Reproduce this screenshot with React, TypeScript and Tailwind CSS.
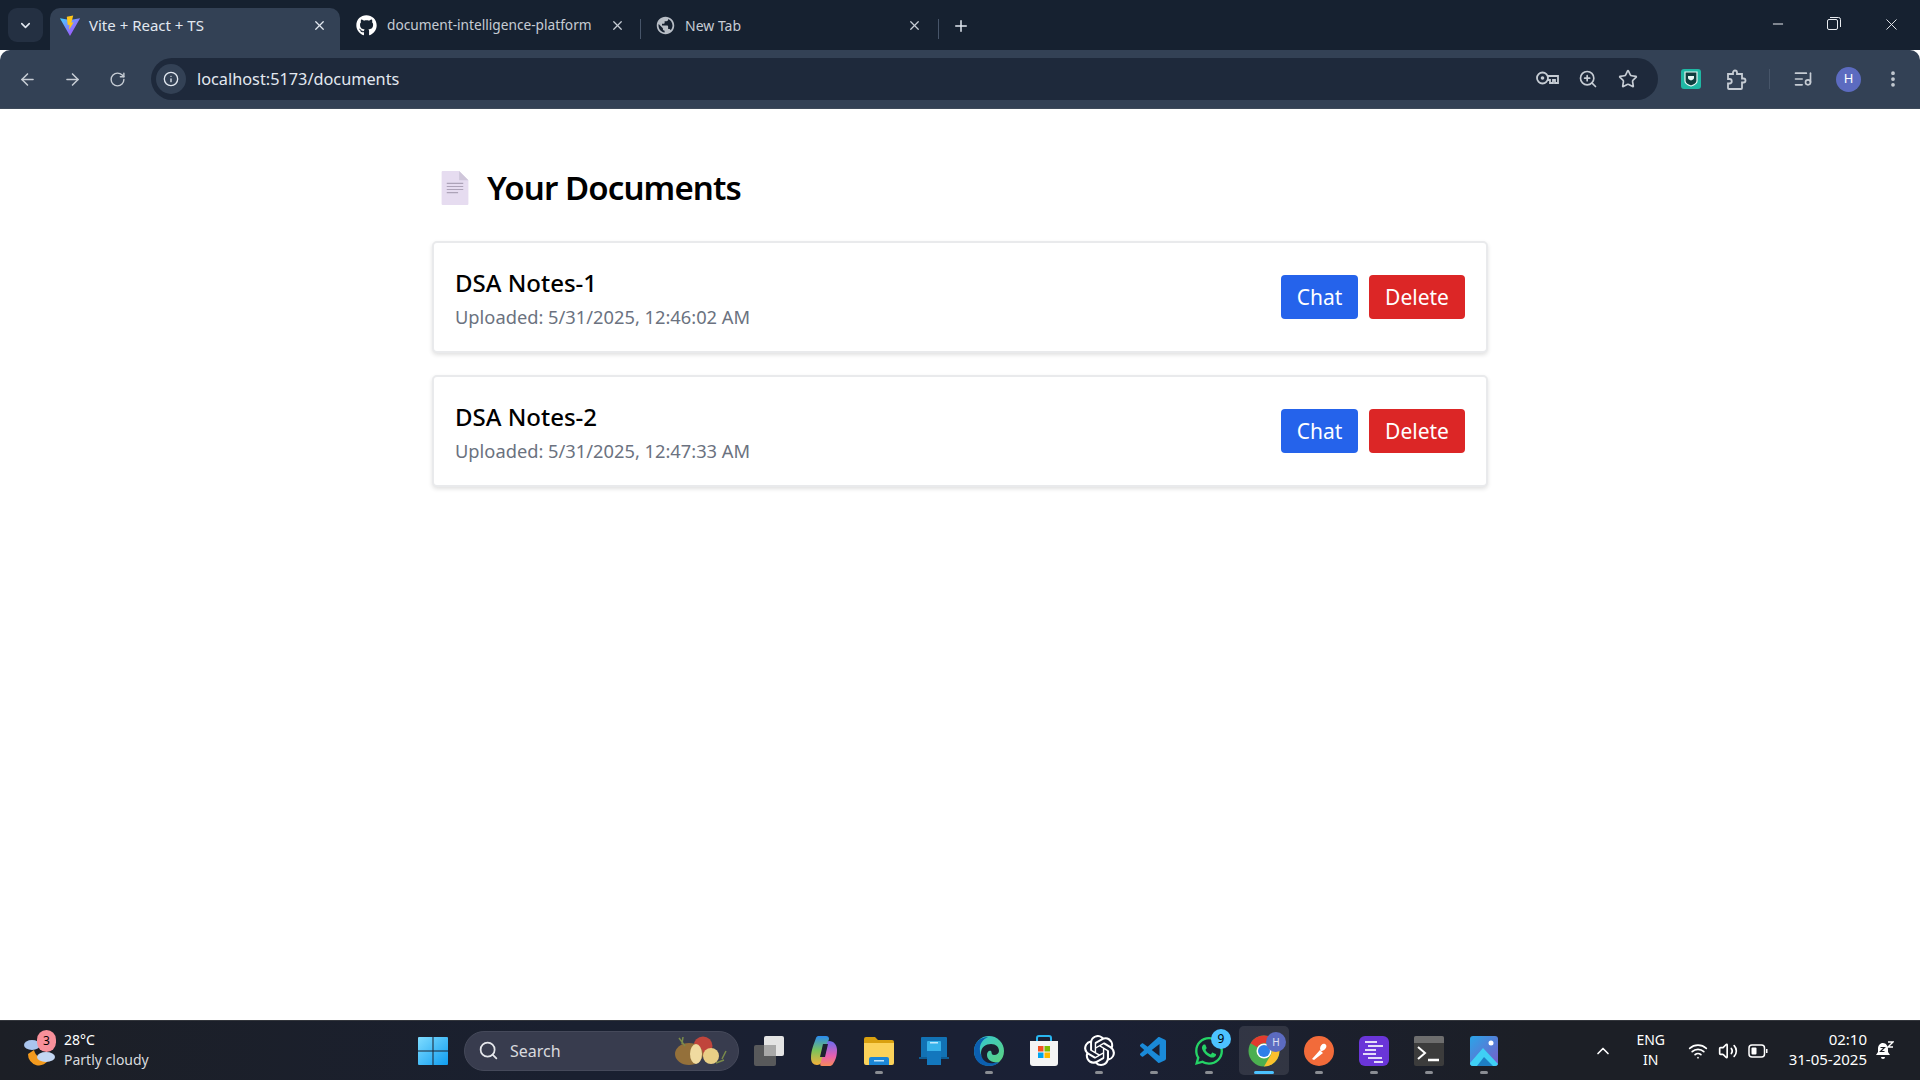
import { ArrowLeft, ArrowRight, RotateCw, Info, ZoomIn, Star, ChevronDown, X, Plus, Minus, Search, ChevronUp, Wifi, Volume2, ListMusic, MoreVertical } from 'lucide-react';
import { FaGithub, FaWhatsapp } from 'react-icons/fa';
import { MdPublic } from 'react-icons/md';
import { SiOpenai } from 'react-icons/si';
import { VscVscode } from 'react-icons/vsc';
import type { ReactNode } from 'react';

const docs = [
  { name: 'DSA Notes-1', uploaded: 'Uploaded: 5/31/2025, 12:46:02 AM' },
  { name: 'DSA Notes-2', uploaded: 'Uploaded: 5/31/2025, 12:47:33 AM' },
];

function ViteIcon() {
  return (
    <svg width="22" height="22" viewBox="0 0 24 24" className="shrink-0">
      <defs>
        <linearGradient id="vite-a" x1="0" y1="0" x2="1" y2="1">
          <stop offset="0" stopColor="#41d1ff" />
          <stop offset="1" stopColor="#bd34fe" />
        </linearGradient>
      </defs>
      <path d="M1 3.5 12 5.5 23 3.5 12 23Z" fill="url(#vite-a)" />
      <path d="M15.5 0.5 8.5 2 9.5 11 11.5 10.5 11 16 16 8 13.5 8.5Z" fill="#ffc517" />
    </svg>
  );
}

function KeyIcon() {
  return (
    <svg width="23" height="16" viewBox="0 0 23 16" fill="none" stroke="currentColor" strokeWidth="1.800" className="mr-[19px]">
      <circle cx="6.500" cy="7" r="5.500" />
      <circle cx="6.500" cy="7" r="1.800" fill="currentColor" stroke="none" />
      <path d="M12 5h10v7h-3V9h-2v3h-3V9h-2" />
    </svg>
  );
}

function PuzzleIcon() {
  return (
    <svg width="20" height="21" viewBox="0 0 20 21" fill="none" stroke="currentColor" strokeWidth="1.800" className="ml-[26px]">
      <path d="M1 5h5V3.500a2 2 0 0 1 4 0V5h5v4.500h1.500a2 2 0 0 1 0 4H15V19a1 1 0 0 1-1 1H2a1 1 0 0 1-1-1v-4.500h1.500a2 2 0 0 0 0-4.500H1Z" />
    </svg>
  );
}

function ShieldExt() {
  return (
    <div className="w-[20px] h-[20px] rounded-[3px] bg-[#1fb8a4] flex items-center justify-center">
      <svg width="14" height="16" viewBox="0 0 14 16">
        <path d="M1 1h12v9c0 2-3 4-6 5-3-1-6-3-6-5Z" fill="#0f3d3d" stroke="#e6f7f4" strokeWidth="1.2" />
        <path d="M4 5h6v2c0 1-1.5 2-3 2.6C5.500 9 4 8 4 7Z" fill="#e6f7f4" />
      </svg>
    </div>
  );
}

function DocEmoji() {
  return (
    <svg width="28" height="34" viewBox="0 0 26 33" className="shrink-0">
      <path d="M1 0h16l9 9v23a1 1 0 0 1-1 1H1a1 1 0 0 1-1-1V1a1 1 0 0 1 1-1Z" fill="#e6dcf0" />
      <path d="M17 0l9 9h-9Z" fill="#cfc6da" />
      <path d="M5 12h16M5 15h16M5 18h16M5 21h11" stroke="#ada3b8" strokeWidth="1" />
    </svg>
  );
}

function WeatherIcon() {
  return (
    <div className="relative w-[34px] h-[36px]">
      <svg width="34" height="36" viewBox="0 0 34 36" className="absolute left-0 top-0">
        <path d="M4 22a11 11 0 0 0 21 5 12 12 0 0 1-15-9Z" fill="#f39a1e" />
        <ellipse cx="8" cy="13" rx="8" ry="5" fill="#a9c5ee" />
        <ellipse cx="22" cy="25" rx="9" ry="5" fill="#c3d6f2" />
      </svg>
      <span className="absolute left-[13px] top-[-2px] w-[19px] h-[22px] rounded-full bg-[#f8909a] text-black text-[12px] flex items-center justify-center">3</span>
    </div>
  );
}

function WinLogo() {
  return (
    <svg width="30" height="30" viewBox="0 0 30 30">
      <defs>
        <linearGradient id="win-a" x1="0" y1="0" x2="1" y2="1">
          <stop offset="0" stopColor="#7fdcff" />
          <stop offset="1" stopColor="#0f9df0" />
        </linearGradient>
      </defs>
      <path d="M1 1h13.500v13.500H0V2a1 1 0 0 1 1-1ZM15.500 1H29a1 1 0 0 1 1 1v12.500H15.500ZM0 15.500h14.500V29H1a1 1 0 0 1-1-1ZM15.500 15.500H30V28a1 1 0 0 1-1 1H15.500Z" fill="url(#win-a)" />
    </svg>
  );
}

function Veggies() {
  return (
    <svg width="56" height="32" viewBox="0 0 56 32">
      <circle cx="29" cy="11" r="9.500" fill="#c0453c" />
      <ellipse cx="15" cy="19" rx="14" ry="11" fill="#94703a" />
      <ellipse cx="22" cy="19" rx="6" ry="10" fill="#f0dba0" />
      <circle cx="37" cy="21" r="8" fill="#e9cf86" />
      <path d="M5 3l6 8M9 2l-1 7M48 24l4-8M42 28l8-3" stroke="#7a8a4a" strokeWidth="1.500" />
    </svg>
  );
}

function TaskView() {
  return (
    <div className="relative w-[30px] h-[30px]">
      <div className="absolute left-[10px] top-0 w-[20px] h-[20px] rounded-[2px] bg-[#e4e4e4]" />
      <div className="absolute left-0 top-[9px] w-[22px] h-[21px] rounded-[2px] bg-[#5f5f5f]/90" />
      <div className="absolute left-[10px] top-[9px] w-[12px] h-[11px] bg-[#a8a8a8]" />
    </div>
  );
}

function Copilot() {
  return (
    <svg width="28" height="32" viewBox="0 0 28 32">
      <defs>
        <linearGradient id="cop-a" x1="0" y1="0" x2="0" y2="1">
          <stop offset="0" stopColor="#2a8bf0" />
          <stop offset="0.5" stopColor="#7cc35a" />
          <stop offset="1" stopColor="#f5b13a" />
        </linearGradient>
        <linearGradient id="cop-b" x1="0" y1="0" x2="0" y2="1">
          <stop offset="0" stopColor="#6b6cf0" />
          <stop offset="0.6" stopColor="#e85fb0" />
          <stop offset="1" stopColor="#f78a5a" />
        </linearGradient>
      </defs>
      <path d="M9 1h7c2 0 3 1 3 3L12 26c-1 3-3 4-5 4-4 0-6-3-6-7 0-8 3-14 5-20 .5-1.500 1.500-2 3-2Z" fill="url(#cop-a)" />
      <path d="M19 6c5 0 8 4 8 9 0 7-2 11-4 14-1 1.500-2 2-4 2h-7c-2 0-2-1-1.500-3L17 8c.3-1.200 1-2 2-2Z" fill="url(#cop-b)" />
      <path d="M13 9h5l-3 13h-5Z" fill="#1c2130" />
    </svg>
  );
}

function Folder() {
  return (
    <svg width="30" height="28" viewBox="0 0 30 28">
      <path d="M0 2a2 2 0 0 1 2-2h9l3 3h14a2 2 0 0 1 2 2v4H0Z" fill="#d9a00f" />
      <path d="M0 6h30v20a2 2 0 0 1-2 2H2a2 2 0 0 1-2-2Z" fill="#fbd25a" />
      <path d="M5 22a2 2 0 0 1 2-2h16a2 2 0 0 1 2 2v6H5Z" fill="#1b86d6" />
      <rect x="10" y="23" width="10" height="1.500" fill="#bfe3fa" />
    </svg>
  );
}

function Phone() {
  return (
    <svg width="30" height="28" viewBox="0 0 30 28">
      <rect x="2" y="0" width="26" height="22" rx="1" fill="#1272b4" />
      <rect x="0" y="20" width="30" height="2" fill="#0e5c94" />
      <rect x="8" y="4" width="14" height="24" rx="1" fill="#36b2ea" />
      <rect x="8" y="14" width="14" height="14" fill="#1377bd" />
      <rect x="11" y="5" width="8" height="1.500" fill="#bfe8fb" />
    </svg>
  );
}

function Edge() {
  return (
    <svg width="30" height="30" viewBox="0 0 30 30">
      <defs>
        <linearGradient id="edge-a" x1="0" y1="0" x2="1" y2="1">
          <stop offset="0" stopColor="#31c6d8" />
          <stop offset="1" stopColor="#5fd37a" />
        </linearGradient>
      </defs>
      <circle cx="15" cy="15" r="15" fill="url(#edge-a)" />
      <path d="M0 15C0 6 7 1 14 1c-5 2-9 7-8 14 1 8 8 14 19 11-3 3-6 4-10 4C6 30 0 24 0 15Z" fill="#0c5fb0" />
      <path d="M7 17c0-6 5-9 10-9 5 0 8 3 8 7 0 2-2 4-5 4-3 0-2-3-3-4-2-1-4 1-4 4 0 4 4 8 10 7-9 4-16-2-16-9Z" fill="#1a2030" />
    </svg>
  );
}

function Store() {
  return (
    <svg width="30" height="32" viewBox="0 0 30 32">
      <path d="M8 7V3a2 2 0 0 1 2-2h10a2 2 0 0 1 2 2v4" fill="none" stroke="#29b6f0" strokeWidth="2" />
      <path d="M1 6h28v22a3 3 0 0 1-3 3H4a3 3 0 0 1-3-3Z" fill="#f4f4f4" />
      <rect x="9" y="11" width="5.500" height="5.500" fill="#f25022" />
      <rect x="15.500" y="11" width="5.500" height="5.500" fill="#7fba00" />
      <rect x="9" y="17.500" width="5.500" height="5.500" fill="#00a4ef" />
      <rect x="15.500" y="17.500" width="5.500" height="5.500" fill="#ffb900" />
    </svg>
  );
}

function Chrome() {
  return (
    <svg width="32" height="32" viewBox="0 0 32 32">
      <circle cx="16" cy="16" r="15.500" fill="#4caf50" />
      <path d="M16 .5a15.500 15.500 0 0 1 13.400 7.750H16a7.750 7.750 0 0 0-6.700 3.900L2.600 8.250A15.500 15.500 0 0 1 16 .5Z" fill="#e33b2e" />
      <path d="M29.400 8.250A15.500 15.500 0 0 1 16 31.500l6.700-11.600a7.750 7.750 0 0 0 0-7.750 7.750 7.750 0 0 0 0-3.900Z" fill="#fbc02d" />
      <circle cx="16" cy="16" r="7.500" fill="#fff" />
      <circle cx="16" cy="16" r="6" fill="#2f7fe8" />
    </svg>
  );
}

function Postman() {
  return (
    <svg width="30" height="30" viewBox="0 0 30 30">
      <circle cx="15" cy="15" r="15" fill="#f26b3a" />
      <path d="M8 23l8-9 3 3-9 7ZM16 13c0-4 3-6 5-5s2 4-1 6-3 1-4-1Z" fill="#fff" />
    </svg>
  );
}

function NotesApp() {
  return (
    <svg width="30" height="30" viewBox="0 0 30 30">
      <rect width="30" height="30" rx="6" fill="#6a35d8" />
      <path d="M6 6h12M9 10h15M6 14h11M4 18h13M9 22h14M15 26h9" stroke="#e3dbf8" strokeWidth="2" />
    </svg>
  );
}

function TerminalApp() {
  return (
    <div className="w-[30px] h-[30px] rounded-[2px] bg-[#3c3c3c] overflow-hidden">
      <div className="h-[7px] bg-[#6e6e6e]" />
      <svg width="30" height="23" viewBox="0 0 30 23">
        <path d="M4 4l7 6-7 6" fill="none" stroke="#fff" strokeWidth="2" />
        <path d="M14 17h11" stroke="#fff" strokeWidth="2.500" />
      </svg>
    </div>
  );
}

function PhotosApp() {
  return (
    <svg width="28" height="30" viewBox="0 0 28 30">
      <defs>
        <linearGradient id="ph-a" x1="0" y1="0" x2="1" y2="1">
          <stop offset="0" stopColor="#2aa5e8" />
          <stop offset="1" stopColor="#7a5bc8" />
        </linearGradient>
      </defs>
      <rect width="28" height="30" rx="3" fill="url(#ph-a)" />
      <circle cx="21" cy="7" r="2.500" fill="#fff" />
      <path d="M0 27 13 12l15 16v-1a3 3 0 0 1-3 3H3a3 3 0 0 1-3-3Z" fill="#3fd0f5" />
      <path d="M7 30l7-9 9 9Z" fill="#1e7fc4" />
    </svg>
  );
}

function BatteryIcon() {
  return (
    <svg width="20" height="14" viewBox="0 0 20 14" className="ml-[10px]">
      <rect x="1" y="1" width="15.500" height="12" rx="3" fill="none" stroke="#fff" strokeWidth="1.500" />
      <rect x="3.500" y="3.500" width="5" height="7" rx="1" fill="#fff" />
      <path d="M18 5h1.500v4H18Z" fill="#fff" />
    </svg>
  );
}

function SnoozeBell() {
  return (
    <svg width="18" height="20" viewBox="0 0 18 20" className="ml-[9px]">
      <path d="M7 2c-3 0-5 2.500-5 6v3l-2 3h14l-2-3V8c0-3-2-6-5-6Z" fill="#fff" />
      <path d="M5 16h4a2 2 0 0 1-4 0Z" fill="#fff" />
      <path d="M4.500 6.500h4l-4 4h4" fill="none" stroke="#1c1f26" strokeWidth="1.200" />
      <path d="M12 1h5l-5 5h5" fill="none" stroke="#fff" strokeWidth="1.400" />
    </svg>
  );
}

function TaskItem({ children, running, active }: { children: ReactNode; running?: boolean; active?: boolean }) {
  return (
    <div className={`relative w-[50px] h-[49px] mx-[2.500px] rounded-[5px] flex items-center justify-center ${active ? 'bg-white/10' : ''}`}>
      {children}
      {running && <span className={`absolute bottom-[1px] h-[3px] rounded-full ${active ? 'w-[20px] bg-[#4cc2ff]' : 'w-[8px] bg-[#8a8d93]'}`} />}
    </div>
  );
}

export default function App() {
  return (
    <div className="flex flex-col h-screen w-full overflow-hidden bg-white font-['Noto_Sans',sans-serif]">
      {/* Tab strip */}
      <div className="h-[50px] shrink-0 bg-[#162130] flex items-end text-[14px]">
        <div className="w-[35px] h-[34px] ml-2 mb-2 rounded-[9px] bg-[#243042] flex items-center justify-center">
          <ChevronDown size={15} strokeWidth={2.5} className="text-[#e2e8f0]" />
        </div>
        <div className="w-[290px] h-[42px] ml-[7px] rounded-t-[10px] bg-[#334155] flex items-center pl-[9px] pr-[13px] pb-[7px] text-[#e2e8f0]">
          <ViteIcon />
          <span className="ml-[8px] flex-1 text-[15px]">Vite + React + TS</span>
          <X size={15} strokeWidth={2} />
        </div>
        <div className="w-[300px] h-[42px] flex items-center pl-[16px] pb-[7px] text-[#c6ccd4]">
          <FaGithub size={21} className="text-white shrink-0" />
          <span className="ml-[10px] w-[210px] overflow-hidden whitespace-nowrap text-[13.700px]">document-intelligence-platform</span>
          <X size={15} strokeWidth={2} className="ml-[13px] shrink-0" />
        </div>
        <div className="w-px h-[20px] mb-[11px] bg-[#475569]" />
        <div className="w-[297px] h-[42px] flex items-center pl-[14px] pr-[16px] pb-[7px] text-[#c6ccd4]">
          <MdPublic size={21} className="text-[#b8bec6] shrink-0" />
          <span className="ml-[9px] flex-1">New Tab</span>
          <X size={15} strokeWidth={2} />
        </div>
        <div className="w-px h-[20px] mb-[11px] bg-[#475569]" />
        <Plus size={18} strokeWidth={2} className="ml-[13px] mb-[15px] text-[#e2e8f0]" />
        <div className="flex-1" />
        <div className="flex items-center h-full pb-[2px] text-[#e8ebef]">
          <Minus size={16} strokeWidth={1.500} className="mr-[41px]" />
          <svg width="14" height="14" viewBox="0 0 14 14" className="mr-[41px]" fill="none" stroke="currentColor" strokeWidth="1">
            <rect x="0.500" y="2.500" width="10" height="10" rx="1.500" />
            <path d="M3 .5h8.500a2 2 0 0 1 2 2V10" />
          </svg>
          <X size={19} strokeWidth={1.200} className="mr-[19px]" />
        </div>
      </div>

      {/* Toolbar */}
      <div className="h-[59px] shrink-0 bg-[#334155] border-b border-[#3e4a5a] rounded-tl-[10px] rounded-tr-[10px] flex items-center text-[#c6ccd4]">
        <ArrowLeft size={19} strokeWidth={2} className="ml-[18px]" />
        <ArrowRight size={19} strokeWidth={2} className="ml-[26px]" />
        <RotateCw size={17} strokeWidth={2} className="ml-[27px]" />
        <div className="w-[1507px] h-[42px] ml-[25px] rounded-full bg-[#1e293b] flex items-center">
          <div className="w-[30px] h-[30px] ml-[5px] rounded-full bg-[#334155] flex items-center justify-center">
            <Info size={16} strokeWidth={2} className="text-[#e2e8f0]" />
          </div>
          <span className="ml-[11px] pt-[1px] text-[16.300px] text-[#e2e8f0] flex-1">localhost:5173/documents</span>
          <KeyIcon />
          <ZoomIn size={20} strokeWidth={2} className="mr-[20px]" />
          <Star size={20} strokeWidth={2} className="mr-[20px]" />
        </div>
        <div className="ml-[23px]"><ShieldExt /></div>
        <PuzzleIcon />
        <div className="w-px h-[20px] ml-[22px] bg-[#475569]" />
        <ListMusic size={20} strokeWidth={2} className="ml-[23px]" />
        <div className="w-[25px] h-[25px] ml-[23px] rounded-full bg-[#5c6bc0] text-white text-[13px] flex items-center justify-center">H</div>
        <MoreVertical size={20} strokeWidth={2.5} className="ml-[22px]" />
      </div>

      {/* Page */}
      <main className="flex-1 bg-white pt-[59px]">
        <div className="w-[1056px] mx-auto">
          <div className="flex items-center h-[40px] pl-[9px]">
            <DocEmoji />
            <h1 className="ml-[18px] text-[33px] leading-[40px] font-semibold tracking-[-0.900px] text-black">Your Documents</h1>
          </div>
          <div className="mt-[33px] flex flex-col gap-[22px]">
            {docs.map((doc) => (
              <div key={doc.name} className="h-[112px] bg-white border-2 border-[#e9eaec] rounded-[5px] shadow-[0_2px_4px_rgba(0,0,0,0.12)] flex items-center justify-between px-[21px]">
                <div className="pt-[2px]">
                  <div className="text-[24px] leading-[31px] font-medium text-black">{doc.name}</div>
                  <div className="mt-[6px] text-[18.300px] leading-[26px] text-[#6b7280]">{doc.uploaded}</div>
                </div>
                <div className="flex gap-[11px]">
                  <button className="h-[44px] w-[77px] pt-[2px] rounded-[4px] bg-[#2563eb] text-white text-[21px]">Chat</button>
                  <button className="h-[44px] w-[96px] pt-[2px] rounded-[4px] bg-[#dc2626] text-white text-[21px]">Delete</button>
                </div>
              </div>
            ))}
          </div>
        </div>
      </main>

      {/* Taskbar */}
      <div className="h-[60px] shrink-0 border-t border-[#33363c] bg-[linear-gradient(90deg,#1c1f26_0%,#1a2030_30%,#1a2035_55%,#1c1f26_80%)] flex items-center text-white">
        <div className="w-[418px] shrink-0 flex items-center pl-[24px] pb-[2px]">
          <WeatherIcon />
          <div className="ml-[6px] text-[14px] leading-[20px]">
            <div>28°C</div>
            <div className="text-[#d8dade]">Partly cloudy</div>
          </div>
        </div>
        <WinLogo />
        <div className="w-[275px] h-[40px] ml-[16px] rounded-full bg-[#383c4e] border border-[#45495a] flex items-center pl-[13px] pr-[8px]">
          <Search size={21} strokeWidth={2} className="text-[#e5e7eb]" />
          <span className="ml-[11px] flex-1 text-[16px] text-[#d8dade]">Search</span>
          <Veggies />
        </div>
        <div className="ml-[2.500px] flex items-center">
          <TaskItem><TaskView /></TaskItem>
          <TaskItem><Copilot /></TaskItem>
          <TaskItem running><Folder /></TaskItem>
          <TaskItem><Phone /></TaskItem>
          <TaskItem running><Edge /></TaskItem>
          <TaskItem><Store /></TaskItem>
          <TaskItem running><SiOpenai size={31} className="text-white" /></TaskItem>
          <TaskItem running><VscVscode size={32} className="text-[#1a8ad8]" /></TaskItem>
          <TaskItem running>
            <FaWhatsapp size={32} className="text-[#25d366]" />
            <span className="absolute right-[3px] top-[3px] w-[20px] h-[20px] rounded-full bg-[#4cc2ff] text-black text-[12px] flex items-center justify-center">9</span>
          </TaskItem>
          <TaskItem running active>
            <Chrome />
            <span className="absolute right-[3px] top-[6px] w-[20px] h-[20px] rounded-full bg-[#5c6bc0] text-white/80 text-[10px] flex items-center justify-center">H</span>
          </TaskItem>
          <TaskItem running><Postman /></TaskItem>
          <TaskItem running><NotesApp /></TaskItem>
          <TaskItem running><TerminalApp /></TaskItem>
          <TaskItem running><PhotosApp /></TaskItem>
        </div>
        <div className="flex-1" />
        <div className="flex items-center text-[14px] leading-[20px] pr-[26px]">
          <ChevronUp size={20} strokeWidth={2} />
          <div className="ml-[22px] w-[32px] pb-[2px] text-center">
            <div>ENG</div>
            <div>IN</div>
          </div>
          <Wifi size={20} strokeWidth={2} className="ml-[21px]" />
          <Volume2 size={20} strokeWidth={2} className="ml-[10px]" />
          <BatteryIcon />
          <div className="ml-[21px] pb-[3px] text-right text-[15px]">
            <div>02:10</div>
            <div>31-05-2025</div>
          </div>
          <SnoozeBell />
        </div>
      </div>
    </div>
  );
}
